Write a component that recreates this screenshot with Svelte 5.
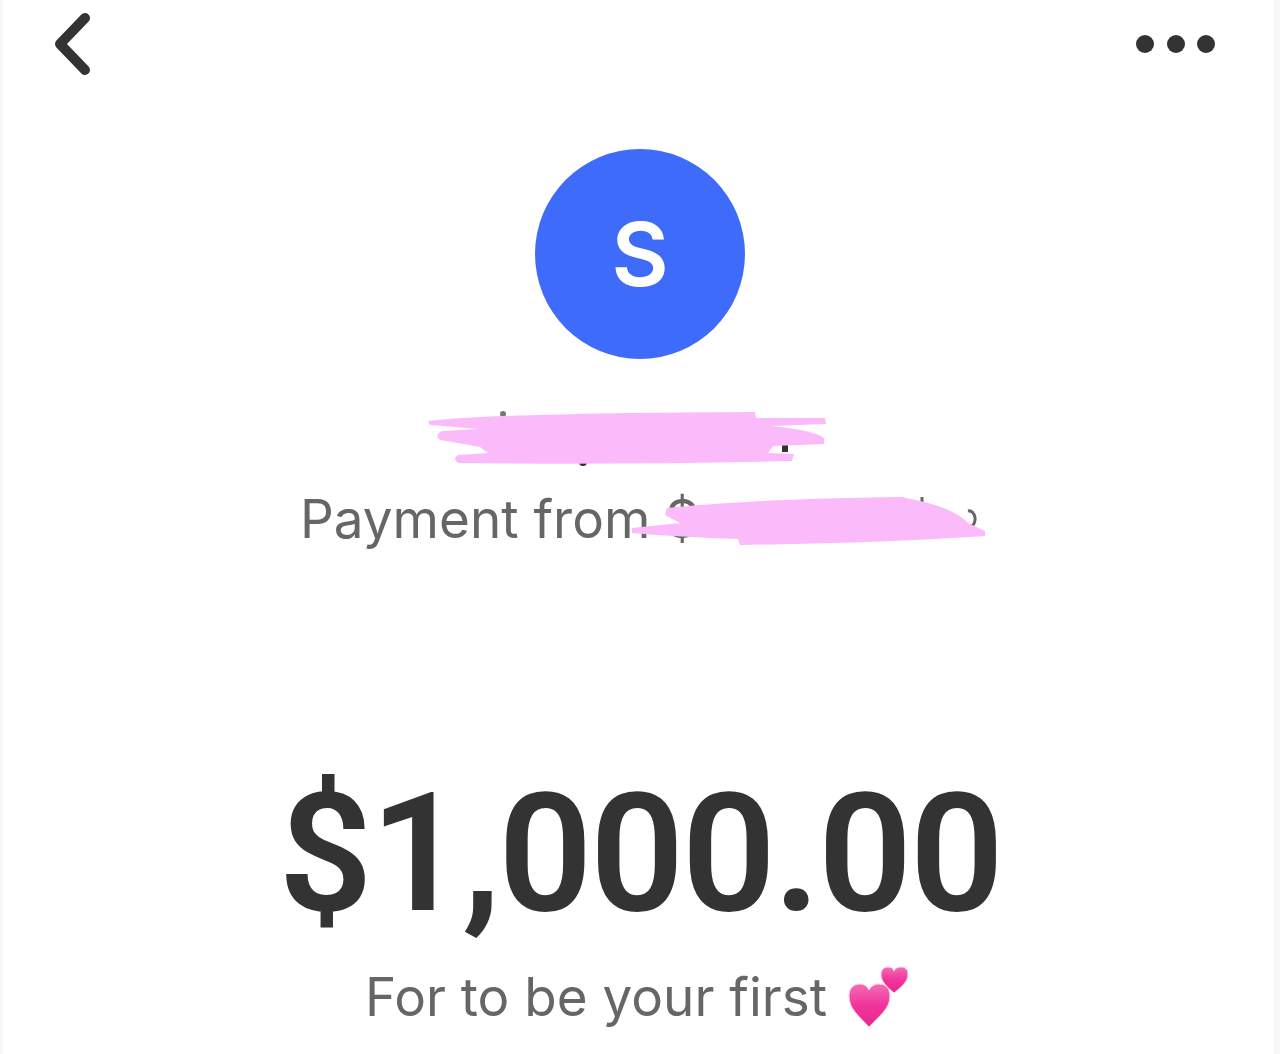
<script>
  let amount = '$1,000.00';
  let note = 'For to be your first';
</script>

<div class="screen">
  <header class="topbar">
    <button class="back" aria-label="Back">
      <svg width="44" height="68" viewBox="0 0 44 68">
        <path d="M35 8 L10 34 L35 60" fill="none" stroke="#333" stroke-width="10" stroke-linecap="round" stroke-linejoin="round" />
      </svg>
    </button>
    <div class="more">
      <span class="dot"></span>
      <span class="dot"></span>
      <span class="dot"></span>
    </div>
  </header>

  <div class="avatar">S</div>

  <div class="name">
    <svg class="scribble" width="400" height="58" viewBox="0 0 400 58">
      <circle cx="75" cy="4" r="3" fill="#777" />
      <path d="M62 38 Q76 43 90 38" fill="none" stroke="#3a2a3a" stroke-width="4" />
      <circle cx="155" cy="52" r="4" fill="#3a2a3a" />
      <rect x="354" y="35" width="6" height="7" fill="#333" />
      <path d="M0 11 Q70 3 327 2 L328 8 L397 8 L398 14 L342 16 Q385 20 396 28 L396 34 L345 36 L340 43 L366 44 L364 51 Q200 55 30 53 Q24 48 30 45 L60 43 L52 37 L30 33 L12 30 Q6 25 14 21 L50 19 L2 15 Z" fill="#fbbbfb" />
    </svg>
  </div>

  <div class="from">
    <span>Payment from $</span>
    <svg class="scribble-from" width="360" height="56" viewBox="0 0 360 56">
      <path d="M292 2 L292 8 M338 16 A6 8 0 1 1 340 32" fill="none" stroke="#666" stroke-width="3" />
      <path d="M37 13 Q120 4 272 2 L290 6 Q325 14 338 28 L355 36 L355 41 Q250 48 110 50 L108 44 Q50 42 2 38 L2 33 L50 28 L35 20 Z" fill="#fbbbfb" />
    </svg>
  </div>

  <div class="amount">{amount}</div>

  <div class="note">
    <span>{note}</span>
    <svg class="hearts" width="60" height="62" viewBox="0 0 60 62">
      <defs>
        <linearGradient id="heart" x1="0" y1="0" x2="0" y2="1">
          <stop offset="0" stop-color="#f56cb4" />
          <stop offset="0.5" stop-color="#f0349c" />
          <stop offset="1" stop-color="#e8278f" />
        </linearGradient>
      </defs>
      <path d="M46 27 C39 21 33 16 33 8 C33 3 37 1 40 1 C43 1 45 2 46 5 C47 2 50 1 53 1 C57 1 60 3 60 8 C60 16 53 21 46 27 Z" fill="url(#heart)" stroke="#fbd3ea" stroke-width="1" />
      <path d="M21 61 C11 50 1 43 1 30 C1 22 6 18 12 18 C16 18 19 20 21 24 C23 20 27 18 31 18 C37 18 42 22 42 30 C42 43 31 50 21 61 Z" fill="url(#heart)" stroke="#fbd3ea" stroke-width="1" />
    </svg>
  </div>
</div>

<style>
  :global(body) {
    background: #fff;
  }

  .screen {
    height: 1054px;
    box-sizing: border-box;
    overflow: hidden;
    display: flex;
    flex-direction: column;
    align-items: center;
    border-left: 3px solid #f8f8f8;
    border-right: 6px solid #f8f8f8;
    font-family: Inter, "Liberation Sans", sans-serif;
    background: #fff;
  }

  .topbar {
    width: 100%;
    height: 149px;
    flex: none;
    display: flex;
    justify-content: space-between;
    align-items: flex-start;
    box-sizing: border-box;
    padding: 10px 59px 0 47px;
  }

  .back {
    border: 0;
    background: none;
    padding: 0;
    display: block;
    height: 68px;
  }

  .back svg {
    display: block;
  }

  .more {
    display: flex;
    gap: 12.5px;
    margin-top: 25px;
  }

  .dot {
    width: 18px;
    height: 18px;
    border-radius: 50%;
    background: #333;
  }

  .avatar {
    width: 210px;
    height: 210px;
    flex: none;
    margin-left: 3px;
    border-radius: 50%;
    background: #3f6bfb;
    color: #fff;
    font-size: 88px;
    font-weight: 600;
    display: flex;
    align-items: center;
    justify-content: center;
  }

  .name {
    position: relative;
    width: 400px;
    height: 58px;
    flex: none;
    margin-top: 51px;
    margin-right: 21px;
  }

  .scribble {
    position: absolute;
    left: 0;
    top: 0;
  }

  .from {
    position: relative;
    flex: none;
    align-self: flex-start;
    height: 60px;
    margin-top: 21px;
    margin-left: 297px;
    color: #666;
    font-size: 53px;
    line-height: 60px;
    white-space: nowrap;
  }

  .scribble-from {
    position: absolute;
    left: 330px;
    top: 6px;
  }

  .amount {
    flex: none;
    margin-top: 210px;
    margin-left: 3px;
    color: #333;
    font-family: Roboto, Inter, sans-serif;
    font-size: 165px;
    font-weight: 600;
    line-height: 190px;
    letter-spacing: -2.5px;
    white-space: nowrap;
  }

  .note {
    flex: none;
    margin-top: 17px;
    margin-right: 4px;
    display: flex;
    align-items: center;
    gap: 21px;
    color: #666;
    font-size: 53px;
    line-height: 60px;
    white-space: nowrap;
  }

  .hearts {
    flex: none;
  }
</style>
